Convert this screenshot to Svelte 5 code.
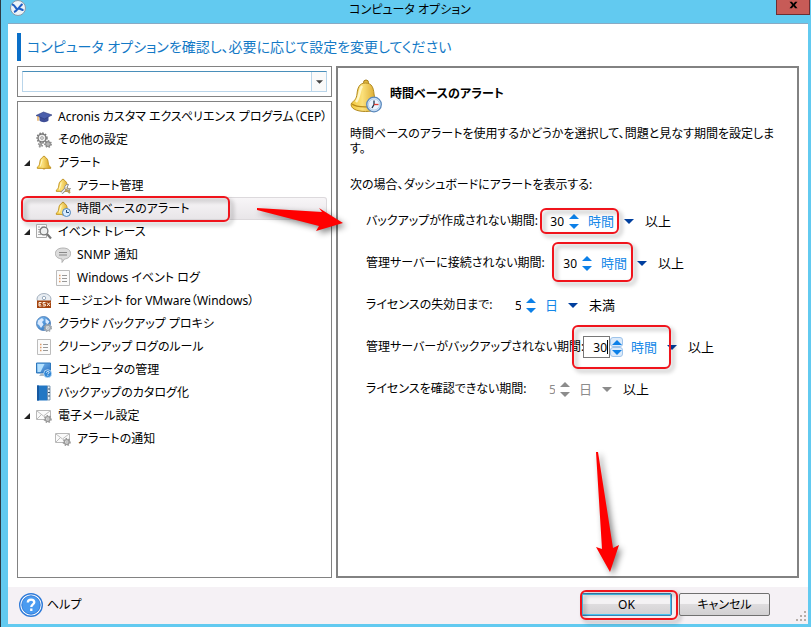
<script>
  const tree = [
    { icon: 'cap', text: 'Acronis カスタマ エクスペリエンス プログラム（CEP）' },
    { icon: 'gears', text: 'その他の設定' },
    { icon: 'bell', text: 'アラート', open: true },
    { icon: 'bellTool', text: 'アラート管理', child: true },
    { icon: 'bellClock', text: '時間ベースのアラート', child: true, selected: true },
    { icon: 'trace', text: 'イベント トレース', open: true },
    { icon: 'bubble', text: 'SNMP 通知', child: true },
    { icon: 'log', text: 'Windows イベント ログ', child: true },
    { icon: 'esx', text: 'エージェント for VMware（Windows）' },
    { icon: 'globe', text: 'クラウド バックアップ プロキシ' },
    { icon: 'log', text: 'クリーンアップ ログのルール' },
    { icon: 'computer', text: 'コンピュータの管理' },
    { icon: 'book', text: 'バックアップのカタログ化' },
    { icon: 'mail', text: '電子メール設定', open: true },
    { icon: 'mail', text: 'アラートの通知', child: true }
  ];

  const rows = [
    { id: 'backup', label: 'バックアップが作成されない期間:', width: 165, value: 30, unit: '時間', after: '以上', mark: 'small' },
    { id: 'connect', label: '管理サーバーに接続されない期間:', width: 178, value: 30, unit: '時間', after: '以上', mark: 'medium' },
    { id: 'expire', label: 'ライセンスの失効日まで:', width: 139, value: 5, unit: '日', after: '未満' },
    { id: 'server', label: '管理サーバーがバックアップされない期間:', width: 208, value: 30, unit: '時間', after: '以上', mark: 'large', active: true },
    { id: 'license', label: 'ライセンスを確認できない期間:', width: 173, value: 5, unit: '日', after: '以上', disabled: true }
  ];
</script>

{#snippet bellShape()}
  <path d="M8 1.2c-.9 0-1.4.6-1.4 1.4C4.3 3.4 3.9 5.6 3.7 8 3.5 10 2.8 11 1.3 12.2v1.2h13.4v-1.2C13.2 11 12.500 10 12.300 8c-.2-2.400-.6-4.600-2.900-5.400 0-.8-.5-1.400-1.400-1.400z" fill="url(#gold)" stroke="#b98a18" stroke-width=".8" />
  <path d="M6.300 13.600a1.800 1.500 0 0 0 3.400 0z" fill="#c8911a" />
  <path d="M6.300 4.500C5.300 6 5.500 9.500 4 11.500" fill="none" stroke="#fff6bd" stroke-width="1.200" />
{/snippet}

{#snippet gearShape(x, y, r, color)}
  <circle cx={x} cy={y} {r} fill="#eee" stroke={color} stroke-width="1.400" />
  <circle cx={x} cy={y} r={r + 1} fill="none" stroke={color} stroke-width="1.400" stroke-dasharray="1.500 1.400" />
  <circle cx={x} cy={y} r={r / 3} fill="#fff" stroke={color} stroke-width=".7" />
{/snippet}

{#snippet icon(name)}
  <svg class="icon" viewBox="0 0 16 16" aria-hidden="true">
    {#if name === 'cap'}
      <path d="M3.500 7v4.500c2 2.300 7 2.300 9 0V7z" fill="#3f4f97" />
      <path d="M0 6.500 7.500 3 16 6l-7.500 4z" fill="#4b5fac" stroke="#2d3b7c" stroke-width=".6" />
      <path d="M2 7.200v4.500" stroke="#e59a35" stroke-width="1.200" />
    {:else if name === 'gears'}
      {@render gearShape(6, 6, 4, '#777')}
      {@render gearShape(12, 12, 2.2, '#888')}
      {@render gearShape(4.5, 13, 1, '#999')}
    {:else if name === 'bell'}
      {@render bellShape()}
    {:else if name === 'bellTool'}
      {@render bellShape()}
      <path d="m6.500 15 5-5" stroke="#888" stroke-width="3" />
      <path d="m6.500 15 5-5" stroke="#f3f3f3" stroke-width="1.500" />
      <path d="M13.500 6.500a3 3 0 1 0 2 4l-2.500.5-1-1.500z" fill="#f3f3f3" stroke="#888" stroke-width=".9" />
      <path d="m10.500 11 4.500 4" stroke="#b59c62" stroke-width="2" />
    {:else if name === 'bellClock'}
      {@render bellShape()}
      <circle cx="11.500" cy="11.500" r="4" fill="#d9ecff" stroke="#4c84bd" />
      <path d="M11.500 9v2.500H14" fill="none" stroke="#24507e" />
    {:else if name === 'trace'}
      <path d="M.5.5h10v13H.5z" fill="#fafafa" stroke="#aaa" />
      <path d="M2 3h2M2 5.500h2M2 8h2M2 10.500h3M5.500 3H9" stroke="#aaa" />
      <circle cx="8" cy="7" r="3.900" fill="#eef0f0" stroke="#777" stroke-width="1.300" />
      <path d="m11 10 4 4.500" stroke="#777" stroke-width="2.200" />
    {:else if name === 'bubble'}
      <path d="M8 1c4.500 0 7.600 2 7.600 5.500s-2.800 5.200-6.100 5.500L7 15.500V12C3 11.600.4 9.800.4 6.500.4 3 3.500 1 8 1z" fill="#dcdcdc" stroke="#a5a5a5" stroke-width=".8" />
      <path d="M4 5.500h8M4 8h8" stroke="#888" />
    {:else if name === 'log'}
      <path d="M1.500.5h13v15h-13z" fill="#fbfbfb" stroke="#bcbcbc" />
      <path d="M7 5.500h5M7 8.500h5M7 11.500h5" stroke="#999" />
      <path d="M4 5.500h1.500M4 8.500h1.500M4 11.500h1.500" stroke="#dc9a68" stroke-width="1.300" />
    {:else if name === 'esx'}
      <ellipse cx="8" cy="6" rx="7" ry="5.500" fill="#e8edf2" stroke="#a5b1bf" />
      <circle cx="8" cy="5" r="1.700" fill="#fff" stroke="#9aabbd" />
      <path d="M1 7.500h14V15H1z" fill="#a4430e" />
      <path d="M5.500 9.500H3V13h2.500M3 11.300h2M9.500 9.500H7v1.700h2.300V13H6.700M11 9.500l3 3.500m0-3.500L11 13" fill="none" stroke="#fff1df" />
    {:else if name === 'globe'}
      <circle cx="7.500" cy="7.500" r="7" fill="url(#blue)" stroke="#4677b3" stroke-width=".8" />
      <path d="M2 4.500 6 2l2 2-2 2 1.500 2.500L5 12 3 9 1.500 8zM9.500 2.500l4 3-2 3-2-2z" fill="#d9eaff" />
      {@render gearShape(11.7, 11.8, 2.6, '#9ba3ab')}
    {:else if name === 'computer'}
      <path d="M.5 1h14v10H.5z" fill="url(#blue)" stroke="#2d77bb" />
      <path d="M1.500 2h7l-4 8h-3z" fill="#b4e1ff" />
      <path d="M5 11.500h5V14H3z" fill="#adbac6" />
      <circle cx="11.700" cy="11.700" r="4" fill="#3287d5" stroke="#e1f2ff" stroke-width=".7" />
      <path d="M10.500 10.600c.2-1.600 2.500-1.500 2.500-.1 0 .8-1.200.8-1.200 1.800m0 1v.8" fill="none" stroke="#fff" stroke-width=".9" />
    {:else if name === 'book'}
      <path d="M1 .5h10.500v15H1z" fill="#2377c4" />
      <path d="M1 .5h2v15H1z" fill="#1658a0" />
      <path d="M11.500 1H14v14h-2.500z" fill="#edf4fb" stroke="#4f7396" stroke-width=".7" />
      <path d="M12 4h2M12 7.500h2M12 11h2" stroke="#38556f" />
    {:else if name === 'mail'}
      <path d="M.5 2.500h14v9H.5z" fill="#fafafa" stroke="#b8b8b8" />
      <path d="m1 3 6.500 5L14 3M1 11l4.500-4.500" fill="none" stroke="#bdbdbd" />
      {@render gearShape(11.7, 11, 2.4, '#999')}
    {/if}
  </svg>
{/snippet}

<div class="window">
  <svg class="defs" aria-hidden="true">
    <defs>
      <linearGradient id="gold"><stop stop-color="#f3c93c" /><stop offset=".4" stop-color="#fbe07a" /><stop offset="1" stop-color="#d29a18" /></linearGradient>
      <linearGradient id="blue" x2="1" y2="1"><stop stop-color="#83c2f5" /><stop offset="1" stop-color="#2369bb" /></linearGradient>
    </defs>
  </svg>

  <header class="titlebar">
    <svg class="app-icon" viewBox="0 0 16 16" aria-hidden="true">
      <circle cx="8" cy="8" r="7.500" fill="#eef3f8" stroke="#8799a8" />
      <path d="M2 4.500c2 0 3 2 5 5M4 12c3-1 5-5 8.500-8M8.500 8.500c2 0 3 1.500 5 1.500" fill="none" stroke="#1f5fc4" stroke-width="2" />
    </svg>
    <h1>コンピュータ オプション</h1>
    <button class="close" aria-label="閉じる">
      <svg viewBox="0 0 10 10" aria-hidden="true"><path d="M0 1h3l2 2.500L7 1h3L6.700 5 10 9H7L5 6.500 3 9H0l3.300-4z" /></svg>
    </button>
  </header>

  <main>
    <h2>コンピュータ オプションを確認し、必要に応じて設定を変更してください</h2>
    <div class="columns">
      <div class="side">
        <div class="search">
          <div class="combo">
            <input type="text" aria-label="検索" />
            <button aria-label="一覧を開く"><svg viewBox="0 0 8 4" aria-hidden="true"><path d="M0 0h8L4 4z" /></svg></button>
          </div>
        </div>
        <nav>
          <ul>
            {#each tree as item}
              <li class:child={item.child} class:selected={item.selected}>
                <span class="twist">
                  {#if item.open}<svg viewBox="0 0 6 6" aria-hidden="true"><path d="M6 0v6H0z" /></svg>{/if}
                </span>
                {@render icon(item.icon)}
                <a href="#top">{item.text}</a>
                {#if item.selected}<span class="mark tree-mark"></span>{/if}
              </li>
            {/each}
          </ul>
        </nav>
      </div>

      <section>
        <div class="heading">
          <svg viewBox="0 0 32 34" aria-hidden="true">
            <circle cx="16" cy="3.500" r="2.500" fill="#e2b93f" stroke="#a17817" />
            <path d="M15.500 4C9 4 7.500 9.500 7 15 6.500 20 4 22 1.500 24c-2 5 4.500 8.500 14 8.500S31 29 29 24c-3-2-4.500-5-5-9-.5-6-2-11-8.500-11z" fill="url(#gold)" stroke="#b28a21" />
            <path d="M2 25c4 3.500 22 4 27 0" fill="none" stroke="#b98c1c" stroke-width="1.200" />
            <path d="M12 7c-3 4-2 11-6 16" fill="none" stroke="#fff6c5" stroke-width="2.500" />
            <circle cx="24" cy="25.500" r="7.300" fill="#cfe4fa" stroke="#5a88bd" stroke-width="1.300" />
            <circle cx="24" cy="25.500" r="5.500" fill="#eaf4ff" stroke="#9dbede" stroke-width=".6" />
            <path d="m22 29 2-3.500v-4" fill="none" stroke="#23354c" stroke-width="1.300" />
            <path d="M24 25.500h4.500" stroke="#e03a30" stroke-width="1.300" />
          </svg>
          <h3>時間ベースのアラート</h3>
        </div>
        <p class="description">時間ベースのアラートを使用するかどうかを選択して、問題と見なす期間を設定します。</p>
        <p class="lead">次の場合、ダッシュボードにアラートを表示する:</p>

        <form>
          {#each rows as row}
            <div class="row" class:disabled={row.disabled} class:active={row.active}>
              <label for={row.id} style="width: {row.width}px">{row.label}</label>
              <div class="controls">
                <input id={row.id} class:short={row.value < 10} type="text" inputmode="numeric" value={row.value} disabled={row.disabled} />
                {#if row.active}<span class="caret"></span>{/if}
                <div class="spin">
                  <button type="button" aria-label="増やす" disabled={row.disabled}><svg viewBox="0 0 10 5" aria-hidden="true"><path d="M0 5 5 0l5 5z" /></svg></button>
                  <button type="button" aria-label="減らす" disabled={row.disabled}><svg viewBox="0 0 10 5" aria-hidden="true"><path d="M0 0h10L5 5z" /></svg></button>
                </div>
                <div class="unit">
                  <select aria-label="単位" disabled={row.disabled} style="width: {row.unit.length * 13 + 20}px">
                    <option>{row.unit}</option>
                  </select>
                  <svg viewBox="0 0 10 5" aria-hidden="true"><path d="M0 0h10L5 5z" /></svg>
                </div>
                {#if row.mark}<span class="mark {row.mark}"></span>{/if}
              </div>
              <span class="after">{row.after}</span>
            </div>
          {/each}
        </form>
      </section>
    </div>
  </main>

  <footer>
    <a class="help" href="#help">
      <svg viewBox="0 0 24 24" aria-hidden="true">
        <circle cx="12" cy="12" r="11.300" fill="#fff" stroke="#2f7bd9" stroke-width="1.400" />
        <circle cx="12" cy="12" r="9.200" fill="#4a9bf0" stroke="#2f7bd9" />
        <path d="M8.800 9.500c.1-4 6.500-3.800 6.500-.2 0 2.200-3 2.200-3 4.800m0 1.500V18" fill="none" stroke="#fff" stroke-width="2.300" />
      </svg>
      ヘルプ
    </a>
    <div class="actions">
      <button class="ok">OK<span class="mark ok-mark"></span></button>
      <button>キャンセル</button>
    </div>
    <svg class="grip" viewBox="0 0 10 10" aria-hidden="true"><path d="M8 0h2v2H8zM4 4h2v2H4zM8 4h2v2H8zM0 8h2v2H0zM4 8h2v2H4zM8 8h2v2H8z" /></svg>
  </footer>

  <svg class="arrows" aria-hidden="true">
    <path d="M257 208 322 212 319 208 343 223 316 231 319 226 257 210z" />
    <path d="M596 452h2L613 548l6-3L610 572 596 547l6 2z" />
  </svg>
</div>

<style>
  :global(body) {
    margin: 0;
  }
  .window {
    position: relative;
    box-sizing: border-box;
    min-height: 100vh;
    display: flex;
    flex-direction: column;
    padding: 0 3px 3px 7px;
    border-left: 1px solid #2d3b44;
    background: #62caf0;
    color: #000;
    font: 12px/16px 'Noto Sans', 'Noto Sans CJK JP', sans-serif;
    font-feature-settings: 'palt';
  }
  .window :is(input, button, select) {
    box-sizing: border-box;
    margin: 0;
    padding: 0;
    border: 0;
    border-radius: 0;
    background: none;
    font: inherit;
    font-feature-settings: inherit;
    color: inherit;
    outline: 0;
  }
  h1, h2, h3, p, ul {
    margin: 0;
    padding: 0;
    font-weight: 400;
  }
  a {
    color: inherit;
    text-decoration: none;
  }
  svg {
    display: block;
    flex: none;
  }
  .defs {
    position: absolute;
    width: 0;
    height: 0;
  }
  .titlebar {
    display: flex;
    align-items: flex-start;
    justify-content: space-between;
    height: 23px;
    border-bottom: 1px solid #88aac4;
  }
  .app-icon {
    width: 16px;
    height: 16px;
    margin: 0 18px 0 2px;
  }
  h1 {
    font-size: 12px;
    line-height: 19px;
  }
  .window .close {
    display: grid;
    place-items: center;
    width: 34px;
    height: 15px;
    padding-bottom: 5px;
    border: 1px solid #6b2f33;
    border-top: 0;
    background: #c75b57;
    margin-right: -2px;
  }
  .close svg {
    width: 9px;
    height: 8px;
  }
  main {
    flex: 1;
    display: flex;
    flex-direction: column;
    padding: 9px;
    background: #fff;
  }
  h2 {
    padding-left: 6px;
    border-left: 4px solid #0a6fc8;
    color: #1379c6;
    font-size: 14px;
    line-height: 28px;
    margin-bottom: 5px;
    white-space: nowrap;
  }
  .columns {
    flex: 1;
    display: flex;
    gap: 4px;
  }
  .side {
    flex: none;
    width: 315px;
    display: flex;
    flex-direction: column;
    gap: 4px;
  }
  .search,
  nav {
    border: 1px solid #828282;
  }
  .search {
    padding: 4px;
  }
  .combo {
    display: flex;
    height: 19px;
    border: 1px solid #b9d5ea;
    border-top-color: #4a8fba;
  }
  .combo input {
    flex: 1;
    min-width: 0;
  }
  .window .combo button {
    display: grid;
    place-items: center;
    width: 15px;
    border-left: 1px solid #b9d5ea;
    background: #fafafa;
  }
  .combo svg {
    width: 7px;
    height: 4px;
    fill: #444;
  }
  nav {
    flex: 1;
    padding: 3px 4px;
  }
  ul {
    list-style: none;
  }
  li {
    position: relative;
    display: flex;
    align-items: center;
    height: 23px;
    white-space: nowrap;
  }
  .twist {
    flex: none;
    width: 14px;
    padding-left: 2px;
    box-sizing: border-box;
  }
  .twist svg {
    width: 6px;
    height: 6px;
    fill: #222;
  }
  .icon {
    width: 16px;
    height: 16px;
    margin-right: 6px;
  }
  .child .twist {
    width: 33px;
  }
  .selected {
    box-sizing: border-box;
    border-radius: 3px;
    background: linear-gradient(#f8f6f8, #e8e5e8);
    box-shadow: inset 0 0 0 1px #dcd9dc;
  }
  .mark {
    position: absolute;
    box-sizing: border-box;
    border: 2px solid #f0141c;
    border-radius: 6px;
    filter: drop-shadow(3px 3px 2px #0005);
    pointer-events: none;
  }
  .tree-mark {
    inset: -1px auto -2px -1px;
    width: 209px;
  }
  section {
    flex: 1;
    min-width: 0;
    padding: 11px 13px 11px 12px;
    border: 2px solid #828282;
  }
  .heading {
    display: flex;
    align-items: center;
    gap: 8px;
  }
  .heading svg {
    width: 32px;
    height: 34px;
  }
  h3 {
    font-size: 12px;
    font-weight: 700;
    margin-bottom: 5px;
  }
  .description {
    margin-top: 13px;
    line-height: 15px;
    padding-right: 2px;
  }
  .lead {
    margin: 21px 0 7px;
  }
  form {
    padding-left: 16px;
  }
  .row {
    display: flex;
    align-items: center;
    height: 42px;
    white-space: nowrap;
  }
  .row label {
    flex: none;
    margin-right: 9px;
  }
  .controls {
    position: relative;
    display: flex;
    align-items: center;
    height: 22px;
    margin-right: 11px;
  }
  .window .controls input {
    width: 27px;
    height: 22px;
    padding-right: 2px;
    text-align: right;
    border: 1px solid transparent;
  }
  .window .controls .short {
    width: 10px;
  }
  .window .active input {
    border-color: #777;
  }
  .caret {
    position: absolute;
    left: 24px;
    top: 4px;
    width: 1px;
    height: 14px;
    background: #000;
  }
  .spin {
    display: flex;
    flex-direction: column;
    color: #0c80e8;
    margin-right: 8px;
  }
  .window .spin button {
    display: grid;
    place-items: center;
    width: 13px;
    height: 10px;
    border: 1px solid transparent;
    border-radius: 3px;
  }
  .window .active .spin button {
    border-color: #9fc4ea;
    background: #dbeafa;
  }
  .spin svg {
    width: 10px;
    height: 5px;
    fill: currentColor;
  }
  .unit {
    display: grid;
    align-items: center;
    justify-items: end;
    color: #003f9e;
  }
  .unit > * {
    grid-area: 1 / 1;
  }
  .window .unit select {
    appearance: none;
    color: #1488e8;
    font-size: 13px;
    opacity: 1;
  }
  .unit svg {
    width: 10px;
    height: 5px;
    fill: currentColor;
    pointer-events: none;
  }
  .after {
    font-size: 13px;
  }
  .disabled .controls,
  .disabled .spin,
  .disabled .unit,
  .window .disabled select {
    color: #8c8c8c;
  }
  .small {
    inset: -2px auto -2px 0;
    width: 79px;
  }
  .medium {
    inset: -10px auto -8px -1px;
    width: 81px;
  }
  .large {
    inset: -11px auto -11px -11px;
    width: 99px;
  }
  footer {
    position: relative;
    box-sizing: border-box;
    display: flex;
    align-items: center;
    justify-content: space-between;
    height: 37px;
    padding: 0 38px 2px 11px;
    background: #f5f1f5;
  }
  .help {
    display: flex;
    align-items: center;
    gap: 4px;
  }
  .help svg {
    width: 24px;
    height: 24px;
  }
  .actions {
    display: flex;
    gap: 7px;
  }
  .window .actions button {
    position: relative;
    width: 91px;
    height: 23px;
    border: 1px solid #707070;
    border-radius: 2px;
    background: linear-gradient(#f4f2f4 45%, #dedcde 50%, #d2d0d2);
  }
  .window .actions .ok {
    border-color: #3c7fb1;
    box-shadow: inset 0 0 0 1px #48c4f0;
  }
  .ok-mark {
    inset: -4px -7px -5px -2px;
  }
  .grip {
    position: absolute;
    right: 2px;
    bottom: 3px;
    width: 10px;
    height: 10px;
    fill: #b5ada8;
  }
  .arrows {
    position: absolute;
    top: 0;
    left: -1px;
    width: 811px;
    height: 627px;
    max-width: 100%;
    fill: #f00;
    filter: drop-shadow(3px 3px 3px #0007);
    pointer-events: none;
  }
</style>
